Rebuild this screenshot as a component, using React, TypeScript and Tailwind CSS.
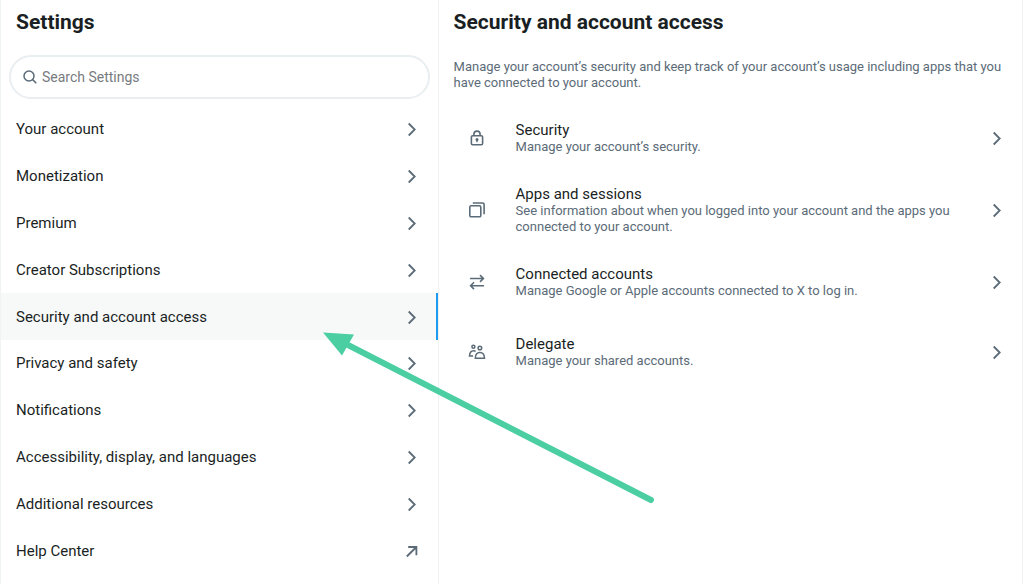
import React from 'react';

interface NavItem {
  label: string;
  active?: boolean;
  external?: boolean;
}

interface AccessItem {
  title: string;
  description: string;
  icon: React.ReactNode;
  spaced?: boolean;
}

const navItems: NavItem[] = [
  { label: 'Your account' },
  { label: 'Monetization' },
  { label: 'Premium' },
  { label: 'Creator Subscriptions' },
  { label: 'Security and account access', active: true },
  { label: 'Privacy and safety' },
  { label: 'Notifications' },
  { label: 'Accessibility, display, and languages' },
  { label: 'Additional resources' },
  { label: 'Help Center', external: true },
];

const accessItems: AccessItem[] = [
  { title: 'Security', description: 'Manage your account’s security.', icon: <LockIcon /> },
  {
    title: 'Apps and sessions',
    description: 'See information about when you logged into your account and the apps you connected to your account.',
    icon: <WindowsIcon />,
  },
  {
    title: 'Connected accounts',
    description: 'Manage Google or Apple accounts connected to X to log in.',
    icon: <SwapIcon />,
  },
  { title: 'Delegate', description: 'Manage your shared accounts.', icon: <PeopleIcon />, spaced: true },
];

function LockIcon() {
  return (
    <svg viewBox="0 0 18 18" className="size-[18px]" fill="none" stroke="currentColor" strokeWidth="1.6" aria-hidden="true">
      <rect x="3.4" y="6.8" width="11.2" height="8.900" rx="1.3" />
      <path d="M5.9 6.800V5.200a3.1 3.1 0 0 1 6.2 0v1.600" />
      <circle cx="9" cy="10.500" r="1.500" fill="currentColor" stroke="none" />
      <path d="M9 10.500v2.800" strokeWidth="1.300" />
    </svg>
  );
}

function WindowsIcon() {
  return (
    <svg viewBox="0 0 18 18" className="size-[18px]" fill="none" stroke="currentColor" strokeWidth="1.6" aria-hidden="true">
      <rect x="1.8" y="4.8" width="11" height="11" rx="1.4" />
      <path d="M4.800 2h9.800c.9 0 1.500.6 1.500 1.500v9.700" />
    </svg>
  );
}

function SwapIcon() {
  return (
    <svg viewBox="0 0 18 18" className="size-[18px]" fill="none" stroke="currentColor" strokeWidth="1.6" aria-hidden="true">
      <path d="M2 5.500h13.200M12 2.100l3.400 3.400L12 8.900M16 12.700H2.800M6 9.300l-3.400 3.400L6 16.100" />
    </svg>
  );
}

function PeopleIcon() {
  return (
    <svg viewBox="0 0 18 18" className="size-[18px]" fill="none" stroke="currentColor" strokeWidth="1.5" aria-hidden="true">
      <circle cx="5.400" cy="3.700" r="1.500" />
      <circle cx="11.900" cy="5" r="1.800" />
      <path d="M7.300 15.300h9.200c0-3.700-1.500-5.900-4.600-5.900s-4.600 2.200-4.600 5.900Z" />
      <path d="M7.600 8.300c-.6-.4-1.200-.5-2-.5-2.600 0-4 1.900-4.100 5.300h3.600" />
    </svg>
  );
}

function ChevronIcon() {
  return (
    <svg viewBox="0 0 16 16" className="size-4 shrink-0 text-[#5b6b78]" fill="none" stroke="currentColor" strokeWidth="1.8" aria-hidden="true">
      <path d="M4.700 2.500l6 6-6 6" />
    </svg>
  );
}

function ExternalIcon() {
  return (
    <svg viewBox="0 0 16 16" className="size-4 shrink-0 text-[#5b6b78]" fill="none" stroke="currentColor" strokeWidth="1.8" aria-hidden="true">
      <path d="M2.800 13.500 11.900 4.500M4.200 4h8.200v8.200" />
    </svg>
  );
}

function SettingsNav() {
  return (
    <nav aria-label="Settings" className="flex flex-1 flex-col pb-2.5">
      {navItems.map(item => (
        <a
          key={item.label}
          href="#"
          aria-current={item.active ? 'page' : undefined}
          className={`flex flex-1 items-center justify-between border-r-2 pl-[15px] pr-4 text-[15px] leading-5 ${
            item.active ? 'border-[#1d9bf0] bg-[#f7f9f9]' : 'border-transparent'
          }`}
        >
          {item.label}
          {item.external ? <ExternalIcon /> : <ChevronIcon />}
        </a>
      ))}
    </nav>
  );
}

function AccessRow({ title, description, icon, spaced }: AccessItem) {
  return (
    <a href="#" className={`flex items-center py-[15px] pl-[29px] pr-[17px] ${spaced ? 'mt-1.5' : ''}`}>
      <span className="text-[#5b6b78]">{icon}</span>
      <span className="ml-[30px] mr-8 flex-1">
        <span className="block text-[15px] leading-[18px]">{title}</span>
        <span className="block text-[13px] leading-4 text-[#5b6b78]">{description}</span>
      </span>
      <ChevronIcon />
    </a>
  );
}

function App() {
  return (
    <div className="relative mr-px grid min-h-screen grid-cols-[3fr_4fr] border-x border-[#eff3f4] bg-white font-['Roboto','Liberation_Sans',sans-serif] text-[#1a1f24]">
      <section className="flex flex-col border-r border-[#eff3f4]">
        <h1 className="px-[15px] pt-2.5 text-[21px] leading-6 font-bold">Settings</h1>
        <label className="mx-2 mt-[21px] mb-[7px] flex h-11 items-center gap-1 rounded-full border-2 border-[#e9eef1] pr-3 pl-[11px]">
          <svg viewBox="0 0 16 16" className="size-4 text-[#5b6b78]" fill="none" stroke="currentColor" strokeWidth="1.5" aria-hidden="true">
            <circle cx="7" cy="7" r="5" />
            <path d="m10.600 10.600 3.700 3.700" />
          </svg>
          <input
            type="search"
            aria-label="Search Settings"
            placeholder="Search Settings"
            className="min-w-0 flex-1 text-sm outline-none placeholder:text-[#777b80]"
          />
        </label>
        <SettingsNav />
      </section>

      <main>
        <h2 className="px-[15px] pt-2.5 text-[21px] leading-6 font-bold">Security and account access</h2>
        <p className="mt-[25px] mb-[15px] px-[15px] text-[13px] leading-4 text-[#5b6b78]">
          Manage your account’s security and keep track of your account’s usage including apps that you have connected to
          your account.
        </p>
        {accessItems.map(item => (
          <AccessRow key={item.title} {...item} />
        ))}
      </main>

      {/* arrow pointing at the active entry */}
      <svg viewBox="0 0 332 174" className="pointer-events-none absolute top-[331px] left-[321px] w-[332px]" fill="#4bcea2" aria-hidden="true">
        <path d="M26 14 329 169" stroke="#4bcea2" strokeWidth="6" strokeLinecap="round" />
        <path d="M1 1.500 32 3.500 20 24.500Z" />
      </svg>
    </div>
  );
}

export default App;
